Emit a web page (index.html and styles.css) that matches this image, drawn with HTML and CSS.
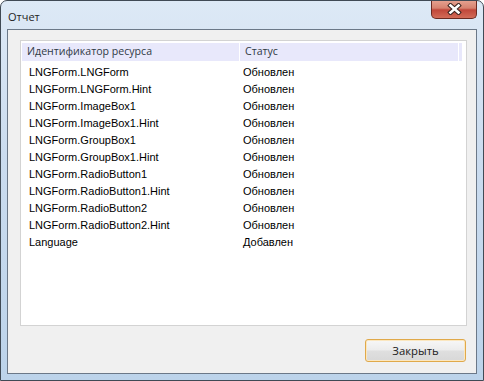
FILE: index.html
```html
<!DOCTYPE html>
<html lang="ru">

<head>
    <meta charset="UTF-8">
    <meta name="viewport" content="width=device-width, initial-scale=1.0">
    <title>Отчет</title>
    <link rel="stylesheet" href="styles.css">
</head>

<body>

    <section class="window">
        <header class="titlebar">
            <h1 class="title">Отчет</h1>
            <button class="close_btn" aria-label="Закрыть">
                <svg width="15" height="12" viewBox="0 0 15 12">
                    <path d="M3.5 2.5 L11.5 9.5 M11.5 2.5 L3.5 9.5" stroke="#3b2420" stroke-width="4.6" stroke-linecap="square" fill="none"/>
                    <path d="M3.5 2.5 L11.5 9.5 M11.5 2.5 L3.5 9.5" stroke="#ffffff" stroke-width="2.6" stroke-linecap="square" fill="none"/>
                </svg>
            </button>
        </header>

        <article class="client">
            <div class="report_list">
                <div class="list_head">
                    <div class="col_name">Идентификатор ресурса</div>
                    <div class="col_status">Статус</div>
                    <div class="col_rest"></div>
                </div>
                <div class="list_rows">
                    <div class="row"><span class="cell_name">LNGForm.LNGForm</span><span class="cell_status">Обновлен</span></div>
                    <div class="row"><span class="cell_name">LNGForm.LNGForm.Hint</span><span class="cell_status">Обновлен</span></div>
                    <div class="row"><span class="cell_name">LNGForm.ImageBox1</span><span class="cell_status">Обновлен</span></div>
                    <div class="row"><span class="cell_name">LNGForm.ImageBox1.Hint</span><span class="cell_status">Обновлен</span></div>
                    <div class="row"><span class="cell_name">LNGForm.GroupBox1</span><span class="cell_status">Обновлен</span></div>
                    <div class="row"><span class="cell_name">LNGForm.GroupBox1.Hint</span><span class="cell_status">Обновлен</span></div>
                    <div class="row"><span class="cell_name">LNGForm.RadioButton1</span><span class="cell_status">Обновлен</span></div>
                    <div class="row"><span class="cell_name">LNGForm.RadioButton1.Hint</span><span class="cell_status">Обновлен</span></div>
                    <div class="row"><span class="cell_name">LNGForm.RadioButton2</span><span class="cell_status">Обновлен</span></div>
                    <div class="row"><span class="cell_name">LNGForm.RadioButton2.Hint</span><span class="cell_status">Обновлен</span></div>
                    <div class="row"><span class="cell_name">Language</span><span class="cell_status">Добавлен</span></div>
                </div>
            </div>

            <div class="footer">
                <button class="close_button">Закрыть</button>
            </div>
        </article>
    </section>

</body>

</html>
```
FILE: styles.css
```css
body {
    margin: 0;
    font-family: "Liberation Sans", Arial, sans-serif;
    background: #ffffff;
}

.window {
    box-sizing: border-box;
    width: 484px;
    height: 381px;
    border: 1px solid #404a55;
    border-radius: 7px 7px 0 0;
    background: linear-gradient(to bottom, #dde9f6 0%, #cbdcef 40%, #bcd3ea 100%);
    padding: 0 6px 6px 6px;
    overflow: hidden;
}

.titlebar {
    height: 28px;
    display: flex;
    align-items: flex-start;
    justify-content: space-between;
}

.title {
    margin: 0;
    padding: 8px 0 0 1px;
    font-family: "Open Sans", "Noto Sans", sans-serif;
    font-size: 11px;
    font-weight: normal;
    color: #1e1e1e;
}

.close_btn {
    width: 46px;
    height: 19px;
    margin: -1px 0 0 0;
    padding: 0;
    border: 1px solid #6a2a22;
    border-top: none;
    border-radius: 0 0 5px 5px;
    background: linear-gradient(to bottom, #e7a493 0%, #d6826f 45%, #c0473a 55%, #d26b58 100%);
    display: flex;
    align-items: center;
    justify-content: center;
}

.client {
    box-sizing: border-box;
    height: 345px;
    border: 1px solid #6b7888;
    background: #f0f0f0;
    padding: 10px 9px 0 12px;
}

.report_list {
    box-sizing: border-box;
    height: 286px;
    border: 1px solid #d3d3d3;
    background: #ffffff;
    padding: 2px 4px 0 1px;
}

.list_head {
    display: flex;
    height: 18px;
    background: #e8e8fb;
    font-family: "Open Sans", "Noto Sans", sans-serif;
    font-size: 10.6px;
    color: #303a45;
    line-height: 17px;
}

.col_name {
    width: 218px;
    padding-left: 5px;
    box-sizing: border-box;
    border-right: 1px solid #ffffff;
}

.col_status {
    width: 219px;
    padding-left: 5px;
    box-sizing: border-box;
    border-right: 1px solid #ffffff;
}

.col_rest {
    flex: 1;
}

.list_rows {
    padding-top: 3px;
}

.row {
    display: flex;
    height: 17px;
    line-height: 17px;
    font-size: 11px;
    color: #000000;
}

.cell_name {
    width: 220px;
    padding-left: 7px;
    box-sizing: border-box;
}

.cell_status {
    padding-left: 1px;
}

.footer {
    display: flex;
    justify-content: flex-end;
    padding-top: 13px;
}

.close_button {
    width: 101px;
    height: 23px;
    margin-right: 1px;
    border: 1px solid #e0a94a;
    border-radius: 3px;
    background: linear-gradient(to bottom, #f7f7f7 0%, #ececec 48%, #dfdfdf 52%, #d8d8d8 100%);
    box-shadow: inset 0 0 0 1px #fbe7c0;
    font-family: "Open Sans", "Noto Sans", sans-serif;
    font-size: 11.3px;
    color: #1b1b1b;
    padding: 0;
}
```
